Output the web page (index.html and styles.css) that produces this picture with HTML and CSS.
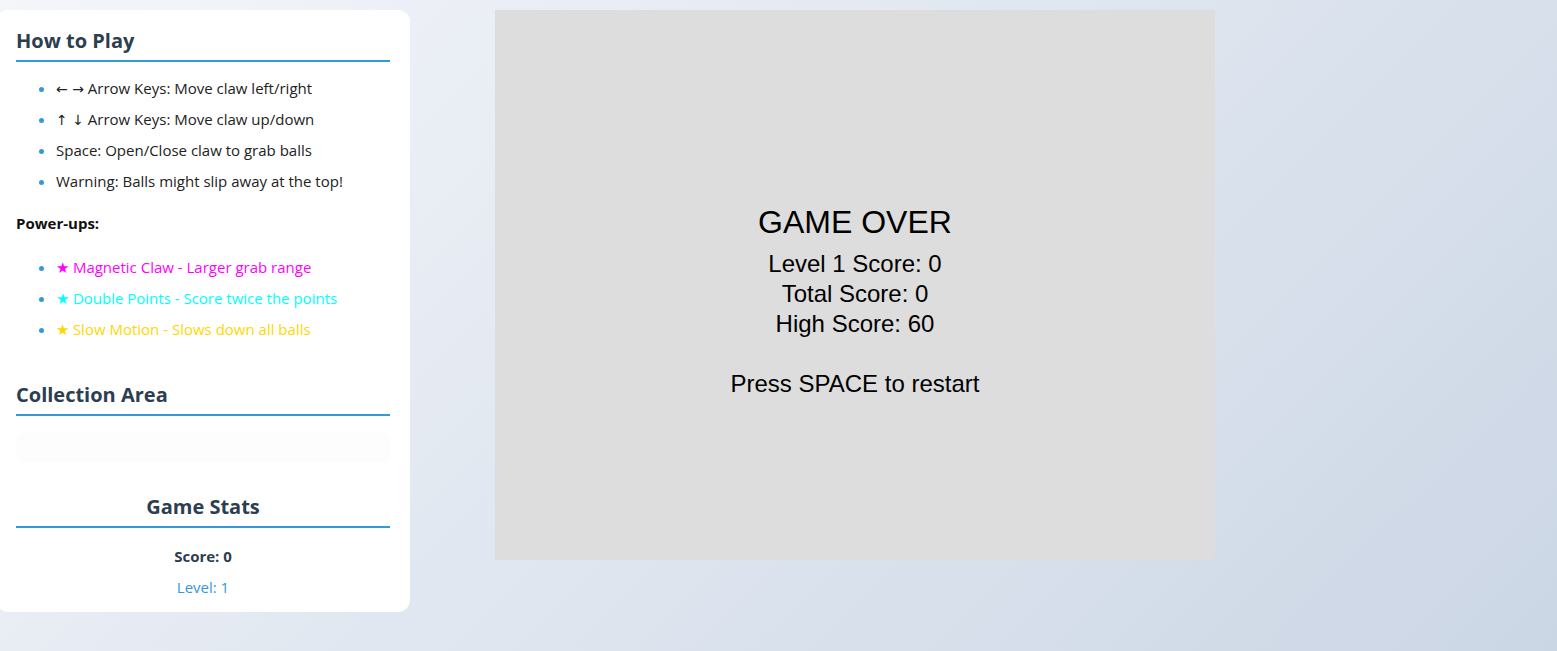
FILE: index.html
```html
<!DOCTYPE html>
<html lang="en">
<head>
<meta charset="utf-8">
<title>Claw Machine</title>
<link rel="stylesheet" href="styles.css">
</head>
<body>
<div class="layout">
  <aside class="panel">
    <h2 class="heading">How to Play</h2>
    <ul class="list">
      <li><span class="arrows">← →</span> Arrow Keys: Move claw left/right</li>
      <li><span class="arrows">↑ ↓</span> Arrow Keys: Move claw up/down</li>
      <li>Space: Open/Close claw to grab balls</li>
      <li>Warning: Balls might slip away at the top!</li>
    </ul>
    <p class="sub">Power-ups:</p>
    <ul class="list power">
      <li class="pu-magnet">★ Magnetic Claw - Larger grab range</li>
      <li class="pu-double">★ Double Points - Score twice the points</li>
      <li class="pu-slow">★ Slow Motion - Slows down all balls</li>
    </ul>
    <h2 class="heading collection-title">Collection Area</h2>
    <div class="collection"></div>
    <h2 class="heading stats-title">Game Stats</h2>
    <div class="stat score">Score: 0</div>
    <div class="stat level">Level: 1</div>
  </aside>
  <main class="game">
    <div class="over-title">GAME OVER</div>
    <div class="over-line first">Level 1 Score: 0</div>
    <div class="over-line">Total Score: 0</div>
    <div class="over-line">High Score: 60</div>
    <div class="over-line restart">Press SPACE to restart</div>
  </main>
</div>
</body>
</html>
```

FILE: styles.css
```css
html, body {
  margin: 0;
  height: 100%;
}
body {
  background: linear-gradient(135deg, #f4f6fa 0%, #cbd6e5 100%);
  font-family: "Open Sans", "Noto Sans", sans-serif;
  color: #222;
  overflow: hidden;
}
.layout {
  display: flex;
  align-items: flex-start;
  padding-top: 10px;
}
.panel {
  width: 414px;
  box-sizing: border-box;
  margin-left: -4px;
  padding: 19px 20px 14px 20px;
  background: #ffffff;
  border-radius: 12px;
  display: flex;
  flex-direction: column;
}
.heading {
  margin: 0;
  font-size: 20px;
  line-height: 24px;
  font-weight: 700;
  color: #2c3e50;
  padding-bottom: 7px;
  border-bottom: 2px solid #3498db;
}
.list {
  margin: 15px 0 20px;
  padding-left: 40px;
  display: flex;
  flex-direction: column;
  gap: 9px;
  font-size: 15px;
  line-height: 22px;
}
.list li {
  height: 22px;
}
.list li::marker {
  color: #3498db;
}
.arrows {
  font-family: "DejaVu Sans", sans-serif;
  font-size: 14px;
  line-height: 1;
}
.sub {
  margin: 0;
  font-size: 15px;
  line-height: 22px;
  font-weight: 700;
  color: #111;
}
.power {
  margin-top: 22px;
  margin-bottom: 43px;
}
.pu-magnet { color: #ff00ff; }
.pu-double { color: #00ffff; }
.pu-slow { color: #ffd700; }
.collection {
  margin-top: 16px;
  height: 30px;
  border-radius: 8px;
  background: #fdfdfe;
}
.stats-title {
  margin-top: 33px;
  text-align: center;
}
.stat {
  text-align: center;
  font-size: 15px;
  line-height: 22px;
}
.score {
  margin-top: 17px;
  font-weight: 700;
  color: #2c3e50;
}
.level {
  margin-top: 9px;
  color: #3498db;
}
.game {
  margin-left: 85px;
  width: 720px;
  height: 550px;
  box-sizing: border-box;
  padding-top: 194px;
  background: #dddddd;
  display: flex;
  flex-direction: column;
  align-items: center;
  font-family: "Liberation Sans", Arial, sans-serif;
  color: #000;
}
.over-title {
  font-size: 32px;
  line-height: 36px;
}
.over-line {
  font-size: 24px;
  line-height: 30px;
}
.over-line.first {
  margin-top: 9px;
}
.restart {
  margin-top: 30px;
}
```
